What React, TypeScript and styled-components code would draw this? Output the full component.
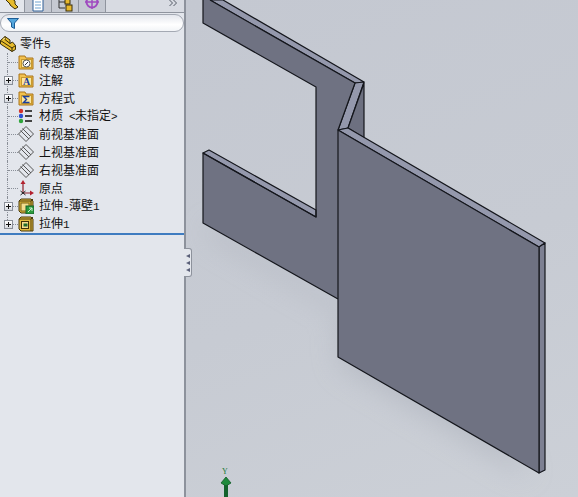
import { FC, ReactNode } from 'react';
import styled, { createGlobalStyle } from 'styled-components';

const GlobalStyle = createGlobalStyle`
  html, body {
    margin: 0;
    padding: 0;
    background: #c6cad3;
  }
`;

const Window = styled.div`
  display: flex;
  width: 578px;
  height: 497px;
  overflow: hidden;
`;

const Panel = styled.aside`
  position: relative;
  flex: 0 0 184px;
  display: flex;
  flex-direction: column;
  background: #e3e6ec;
  border-right: 2px solid #8d929c;
  font-family: 'Noto Sans CJK SC', 'Liberation Sans', sans-serif;
  font-size: 12px;
  color: #111;
`;

// half-width characters of the tree labels, 6px wide next to 12px CJK
const Latin = styled.span`
  font-family: 'Liberation Mono', monospace;
  font-size: 11px;
  letter-spacing: -0.6px;
`;

const TabBar = styled.div`
  flex: 0 0 13px;
  display: flex;
  align-items: flex-end;
  overflow: hidden;
  background: #d8dbe2;
  border-bottom: 1px solid #8f949e;
  box-sizing: border-box;
`;

const TabButton = styled.div<{ $active?: boolean; $width: number }>`
  flex: 0 0 ${({ $width }) => $width}px;
  height: 13px;
  display: flex;
  align-items: flex-end;
  justify-content: center;
  box-sizing: border-box;
  background: ${({ $active }) => ($active ? '#e3e6ec' : '#c5c9d2')};
  border-right: 1px solid #8f949e;
`;

const MoreTabs = styled.div`
  align-self: flex-start;
  margin-left: auto;
  margin-right: 6px;

  svg {
    display: block;
  }
`;

const FilterBar = styled.div`
  flex: 0 0 18px;
  display: flex;
  align-items: center;
  margin: 1px 0 0;
  padding-left: 6px;
  box-sizing: border-box;
  background: linear-gradient(#e4e7ed, #ffffff 60%, #f2f4f7);
  border: 1px solid #a4a9b3;
  border-radius: 9px;
`;

const Tree = styled.div`
  display: flex;
  flex-direction: column;
  padding-top: 3px;
  border-bottom: 2px solid #3f7cc0;
`;

const Row = styled.div<{ $root?: boolean; $last?: boolean }>`
  position: relative;
  height: 18px;
  display: flex;
  align-items: center;
  gap: ${({ $root }) => ($root ? 4 : 5)}px;
  padding-left: ${({ $root }) => ($root ? 0 : 18)}px;
  line-height: 18px;
  white-space: pre;

  ${({ $root, $last }) =>
    !$root &&
    `
    &::before {
      content: '';
      position: absolute;
      left: 8px;
      top: 9px;
      width: 10px;
      border-top: 1px dotted #8a8f98;
    }
    &::after {
      content: '';
      position: absolute;
      left: 7px;
      top: 0;
      height: ${$last ? 9 : 18}px;
      border-left: 1px dotted #8a8f98;
    }
  `}
`;

const Label = styled.span`
  display: block;
`;

const Expander = styled.span`
  position: absolute;
  z-index: 1;
  left: 4px;
  top: 5px;
  width: 7px;
  height: 7px;
  border: 1px solid #8a8f98;
  background: linear-gradient(#ffffff, #d6d9e0);

  &::before {
    content: '';
    position: absolute;
    left: 1px;
    top: 3px;
    width: 5px;
    height: 1px;
    background: #111;
  }
  &::after {
    content: '';
    position: absolute;
    left: 3px;
    top: 1px;
    width: 1px;
    height: 5px;
    background: #111;
  }
`;

const IconSlot = styled.span`
  flex: 0 0 16px;
  height: 16px;
  display: block;

  svg {
    display: block;
  }
`;

const Splitter = styled.div`
  position: absolute;
  z-index: 2;
  top: 248px;
  left: 184px;
  width: 7px;
  height: 27px;
  display: flex;
  flex-direction: column;
  align-items: center;
  justify-content: center;
  gap: 3px;
  background: #e3e6ec;
  border: 1px solid #8d929c;
  border-left: 0;
  border-radius: 0 3px 3px 0;
`;

const SplitterArrow = styled.span`
  width: 0;
  height: 0;
  border-top: 2.5px solid transparent;
  border-bottom: 2.5px solid transparent;
  border-right: 4px solid #5a5f78;
`;

const Viewport = styled.main`
  flex: 1;
  min-width: 0;
  background: linear-gradient(160deg, #c4c8d1, #c7cbd3 55%, #ccd0d7);

  svg {
    display: block;
  }
`;

const FolderIcon: FC<{ children?: ReactNode }> = ({ children }) => (
  <svg width="16" height="16" viewBox="0 0 16 16">
    <path d="M1 15V2h6l1 2h7v11z" fill="#f2c14e" stroke="#a9741a" />
    <rect x="3.500" y="5.500" width="10" height="8" fill="#fbe6a2" stroke="#c99a2e" />
    {children}
  </svg>
);

const PartIcon = () => (
  <svg width="16" height="16" viewBox="0 0 16 16">
    <path d="M0.500 4.500L5 0.500L10 4V7.500L12.500 6L15.500 9.500V13.500L12 15.500L0.500 8z" fill="#e6bb2c" stroke="#3a2e08" />
    <path d="M0.500 4.500L12 12V15.500M12 12L15.500 9.500M5 0.500V3.500L10 7.500" fill="none" stroke="#3a2e08" />
    <path d="M3 3.500L5 2" stroke="#fff2b0" />
  </svg>
);

const MaterialIcon = () => (
  <svg width="16" height="16" viewBox="0 0 16 16">
    <circle cx="3" cy="3" r="2.200" fill="#d3322b" />
    <circle cx="3" cy="8" r="2.200" fill="#2b4fd3" />
    <circle cx="3" cy="13" r="2.200" fill="#2ea53a" />
    <path d="M7 3h7M7 8h7M7 13h7" stroke="#444" strokeWidth="2" />
  </svg>
);

const PlaneIcon = () => (
  <svg width="16" height="16" viewBox="0 0 16 16">
    <path d="M8 0.500L15.500 8L8 15.500L0.500 8zM4.500 2.500L13 11M2.500 4.500L11 13" fill="none" stroke="#555" />
  </svg>
);

const OriginIcon = () => (
  <svg width="16" height="16" viewBox="0 0 16 16">
    <path d="M5 3v10h9" fill="none" stroke="#8d1f2a" strokeWidth="1.200" />
    <path d="M5 0l2.500 4h-5zM16 13l-4-2.500v5z" fill="#b3202e" />
    <path d="M2.500 11l5 4M7.500 11l-5 4" stroke="#222" />
  </svg>
);

const ExtrudeIcon: FC<{ thin?: boolean }> = ({ thin }) => (
  <svg width="16" height="16" viewBox="0 0 16 16">
    <path d="M1 3l2-2h10l2 2v12H3l-2-2z" fill="#e2ba3c" stroke="#4a3a0c" />
    <path d="M1 3h12v12M13 3l2-2" fill="none" stroke="#4a3a0c" />
    {thin ? (
      <>
        <rect x="3" y="5" width="8" height="8" fill="#f3dd8e" stroke="#7a6217" />
        <rect x="8" y="8" width="8" height="8" fill="#2b9a3c" stroke="#17602a" />
        <path d="M10 14l4-4M11 10h3v3" fill="none" stroke="#cfeecf" />
      </>
    ) : (
      <>
        <rect x="3.500" y="5.500" width="7" height="7" fill="#f3dd8e" stroke="#3f3207" />
        <rect x="5.500" y="7.500" width="4" height="3" fill="#1f6b2c" />
      </>
    )}
  </svg>
);

const FunnelIcon = () => (
  <svg width="12" height="11" viewBox="0 0 12 11">
    <path d="M0.500 0.500h11L7.500 5v5.500l-3-1.500V5z" fill="#53a6dc" stroke="#1d5d96" />
  </svg>
);

const treeItems: { id: string; label: ReactNode; icon: ReactNode; expand?: boolean }[] = [
  {
    id: 'sensors',
    label: '传感器',
    icon: (
      <FolderIcon>
        <circle cx="8.500" cy="9.500" r="3.500" fill="#fff" stroke="#555" />
        <path d="M7 11l3-3" stroke="#333" />
      </FolderIcon>
    ),
  },
  {
    id: 'annotations',
    label: '注解',
    expand: true,
    icon: (
      <FolderIcon>
        <text x="5" y="13" fontFamily="Liberation Serif" fontWeight="700" fontSize="10" fill="#1c3f9c">
          A
        </text>
      </FolderIcon>
    ),
  },
  {
    id: 'equations',
    label: '方程式',
    expand: true,
    icon: (
      <FolderIcon>
        <path d="M11.500 6.500h-6l3 3-3 3h6" fill="none" stroke="#1c3f9c" strokeWidth="1.400" />
      </FolderIcon>
    ),
  },
  {
    id: 'material',
    label: (
      <>
        材质<Latin> &lt;</Latin>未指定<Latin>&gt;</Latin>
      </>
    ),
    icon: <MaterialIcon />,
  },
  { id: 'front', label: '前视基准面', icon: <PlaneIcon /> },
  { id: 'top', label: '上视基准面', icon: <PlaneIcon /> },
  { id: 'right', label: '右视基准面', icon: <PlaneIcon /> },
  { id: 'origin', label: '原点', icon: <OriginIcon /> },
  {
    id: 'thin',
    label: (
      <>
        拉伸<Latin>-</Latin>薄壁<Latin>1</Latin>
      </>
    ),
    expand: true,
    icon: <ExtrudeIcon thin />,
  },
  {
    id: 'extrude',
    label: (
      <>
        拉伸<Latin>1</Latin>
      </>
    ),
    expand: true,
    icon: <ExtrudeIcon />,
  },
];

const edge = { stroke: '#14161c', strokeWidth: 1.200, strokeLinejoin: 'round' as const };

// page coordinates, the viewBox starts where the panel ends
const Model = () => (
  <svg width="392" height="497" viewBox="186 0 392 497">
    <defs>
      <filter id="soft" x="-20%" y="-20%" width="140%" height="140%">
        <feGaussianBlur stdDeviation="14" />
      </filter>
    </defs>
    <path d="M203 232L340 312V365L530 478L500 420L340 300L220 225z" fill="#a9adb8" opacity="0.55" filter="url(#soft)" />
    <path d="M210 0H223L364 82L355 83z" fill="#9498ac" {...edge} />
    <path d="M355 83L364 82L348 128L338 130z" fill="#9498ac" {...edge} />
    <path d="M364 83V138L348 128z" fill="#6d7080" {...edge} />
    <path d="M203 0H210L355 83L338 130V299L203 223V153L316 217V87L203 23z" fill="#6f7282" />
    <path d="M203 153L209 150L316 210V217z" fill="#9498ac" {...edge} />
    <path d="M210 0L355 83L338 130M203 0V23L316 87V217L203 153V223L338 299" fill="none" {...edge} />
    <path d="M338 130L348 128L545 243L539 247z" fill="#9498ac" {...edge} />
    <path d="M539 247L545 243V470L539 473z" fill="#7d8092" {...edge} />
    <path d="M338 130L539 247V473L338 357z" fill="#6f7282" {...edge} />
    <text x="222" y="474" fontFamily="Liberation Serif" fontSize="8" fill="#1d7a35">
      Y
    </text>
    <path d="M224 485H228V497H224z" fill="#14622c" />
    <path d="M226 477L231 483L226 486L221 483z" fill="#1f8a3c" stroke="#0f5a26" strokeWidth="0.800" />
  </svg>
);

const App: FC = () => (
  <Window>
    <GlobalStyle />
    <Panel>
      <TabBar>
        <TabButton $active $width={25}>
          <svg width="14" height="13" viewBox="0 3 14 13">
            <path d="M1 4l4-3 5 4v3l3 3-3 2-5-4V8z" fill="#e6bb2c" stroke="#3a2e08" />
          </svg>
        </TabButton>
        <TabButton $width={27}>
          <svg width="12" height="13" viewBox="0 3 12 13">
            <path d="M1 0h10v15H1z" fill="#fff" stroke="#2f5f96" />
            <path d="M3 6h6M3 9h6M3 12h6" stroke="#6fa3cf" />
          </svg>
        </TabButton>
        <TabButton $width={27}>
          <svg width="17" height="13" viewBox="0 3 17 13">
            <path d="M2 0v12h6M2 6h6" fill="none" stroke="#333" />
            <rect x="8" y="3" width="5" height="5" fill="#e8b92e" stroke="#3a2e08" />
            <rect x="9" y="9" width="6" height="6" fill="#e8b92e" stroke="#3a2e08" />
          </svg>
        </TabButton>
        <TabButton $width={27}>
          <svg width="16" height="13" viewBox="0 3 16 13">
            <circle cx="8" cy="6" r="5.500" fill="none" stroke="#a04bc0" strokeWidth="2" />
            <path d="M8 0v13M1 6h14" stroke="#a04bc0" strokeWidth="1.500" />
          </svg>
        </TabButton>
        <MoreTabs>
          <svg width="9" height="6" viewBox="0 0 9 6">
            <path d="M0.500 0L3.500 3L0.500 6M4.500 0L7.500 3L4.500 6" fill="none" stroke="#555b66" />
          </svg>
        </MoreTabs>
      </TabBar>
      <FilterBar>
        <FunnelIcon />
      </FilterBar>
      <Tree>
        <Row $root>
          <IconSlot>
            <PartIcon />
          </IconSlot>
          <Label>
            零件<Latin>5</Latin>
          </Label>
        </Row>
        {treeItems.map((item, index) => (
          <Row key={item.id} $last={index === treeItems.length - 1}>
            {item.expand && <Expander />}
            <IconSlot>{item.icon}</IconSlot>
            <Label>{item.label}</Label>
          </Row>
        ))}
      </Tree>
      <Splitter>
        <SplitterArrow />
        <SplitterArrow />
        <SplitterArrow />
      </Splitter>
    </Panel>
    <Viewport>
      <Model />
    </Viewport>
  </Window>
);

export default App;
